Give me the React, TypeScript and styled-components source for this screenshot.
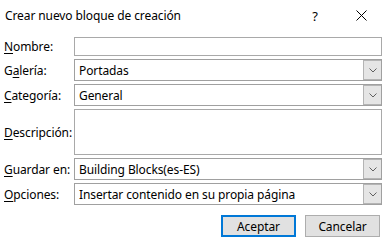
import React from "react";
import styled, { createGlobalStyle } from "styled-components";

const GlobalStyle = createGlobalStyle`
  html, body { margin: 0; padding: 0; background: #ffffff; }
  body {
    font-family: "Segoe UI", "Noto Sans", "Open Sans", "Liberation Sans", sans-serif;
    font-size: 12px;
    color: #000000;
  }
  * { box-sizing: border-box; }
`;

const Dialog = styled.div`
  width: 384px;
  height: 246px;
  background: #ffffff;
  display: flex;
  flex-direction: column;
  overflow: hidden;
`;

const TitleBar = styled.div`
  height: 31px;
  display: flex;
  align-items: center;
  padding-left: 5px;
`;

const Title = styled.div`
  flex: 1;
  font-size: 12px;
  letter-spacing: -0.1px;
`;

const Controls = styled.div`
  display: flex;
  align-items: center;
  height: 100%;
`;

const ControlButton = styled.div`
  width: 46px;
  height: 100%;
  display: flex;
  align-items: center;
  justify-content: center;
  font-size: 13px;
`;

const Form = styled.div`
  margin-top: 6px;
  display: grid;
  grid-template-columns: 70px 308px;
  grid-template-rows: 19px 22px 22px 46px 22px 22px;
  row-gap: 3px;
  padding-left: 4px;
`;

const Label = styled.label`
  align-self: center;
  font-size: 12px;
  white-space: nowrap;
  letter-spacing: -0.1px;
`;

const Key = styled.span`
  text-decoration: underline;
  text-underline-offset: 2px;
`;

const TextBox = styled.div<{ $tall?: boolean }>`
  border: 1px solid #a9a9a9;
  background: #ffffff;
  height: 100%;
`;

const Combo = styled.div`
  border: 1px solid #a0a0a0;
  background: #ffffff;
  height: 100%;
  display: flex;
  align-items: stretch;
`;

const ComboText = styled.div`
  flex: 1;
  display: flex;
  align-items: center;
  padding-left: 4px;
  font-size: 12px;
  white-space: nowrap;
  letter-spacing: -0.1px;
`;

const ComboButton = styled.div`
  width: 18px;
  background: #e5e5e5;
  border: 1px solid #b4b4b4;
  border-right-width: 0;
  display: flex;
  align-items: center;
  justify-content: center;
`;

const ButtonRow = styled.div`
  display: flex;
  justify-content: flex-end;
  gap: 9px;
  padding-right: 4px;
  margin-top: 10px;
`;

const Button = styled.button<{ $primary?: boolean }>`
  width: 75px;
  height: 22px;
  background: #e1e1e1;
  border: ${(p) => (p.$primary ? "2px solid #0078d7" : "1px solid #adadad")};
  font-family: "Segoe UI", "Noto Sans", "Open Sans", "Liberation Sans", sans-serif;
  font-size: 12px;
  color: #000000;
  padding: 0;
  letter-spacing: -0.1px;
`;

const Chevron = () => (
  <svg width="8" height="5" viewBox="0 0 8 5">
    <path d="M0.5 0.5 L4 4 L7.5 0.5" fill="none" stroke="#606060" strokeWidth="1" />
  </svg>
);

const CloseIcon = () => (
  <svg width="11" height="11" viewBox="0 0 11 11">
    <path d="M0.5 0.5 L10.5 10.5 M10.5 0.5 L0.5 10.5" stroke="#000" strokeWidth="1" />
  </svg>
);

const ComboField = ({ value }: { value: string }) => (
  <Combo>
    <ComboText>{value}</ComboText>
    <ComboButton>
      <Chevron />
    </ComboButton>
  </Combo>
);

export default function App() {
  return (
    <>
      <GlobalStyle />
      <Dialog>
        <TitleBar>
          <Title>Crear nuevo bloque de creación</Title>
          <Controls>
            <ControlButton>?</ControlButton>
            <ControlButton>
              <CloseIcon />
            </ControlButton>
          </Controls>
        </TitleBar>
        <Form>
          <Label>
            <Key>N</Key>ombre:
          </Label>
          <TextBox />
          <Label>
            G<Key>a</Key>lería:
          </Label>
          <ComboField value="Portadas" />
          <Label>
            <Key>C</Key>ategoría:
          </Label>
          <ComboField value="General" />
          <Label>
            <Key>D</Key>escripción:
          </Label>
          <TextBox $tall />
          <Label>
            <Key>G</Key>uardar en:
          </Label>
          <ComboField value="Building Blocks(es-ES)" />
          <Label>
            <Key>O</Key>pciones:
          </Label>
          <ComboField value="Insertar contenido en su propia página" />
        </Form>
        <ButtonRow>
          <Button $primary>Aceptar</Button>
          <Button>Cancelar</Button>
        </ButtonRow>
      </Dialog>
    </>
  );
}
